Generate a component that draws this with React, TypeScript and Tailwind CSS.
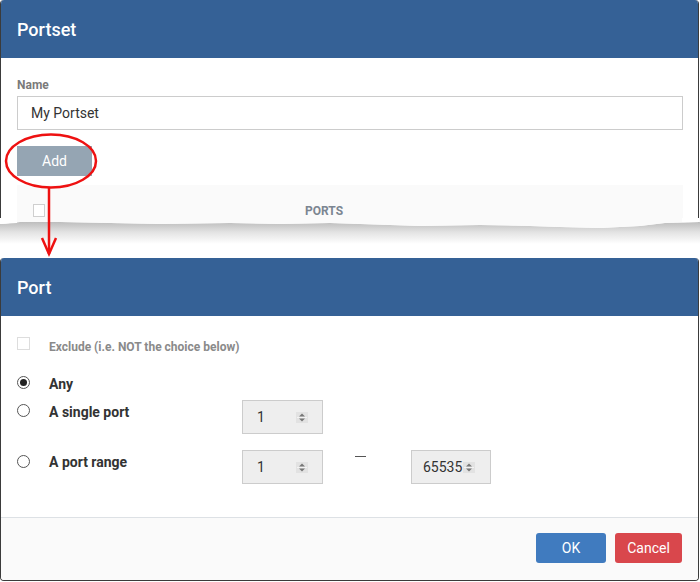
import React from "react";

function Spin() {
  return (
    <svg width="12" height="11" viewBox="0 0 12 11" className="shrink-0">
      <rect x="0" y="0" width="12" height="11" fill="#e2e2e2" />
      <path d="M3 4.5 L6 1.5 L9 4.5 Z" fill="#777" />
      <path d="M3 6.5 L6 9.5 L9 6.5 Z" fill="#777" />
      <line x1="1" y1="5.5" x2="11" y2="5.5" stroke="#f3f3f3" strokeWidth="1" />
    </svg>
  );
}

function Radio({ checked }: { checked?: boolean }) {
  return (
    <span className="w-[13px] h-[13px] rounded-full border border-[#555] bg-white flex items-center justify-center shrink-0">
      {checked && <span className="w-[7px] h-[7px] rounded-full bg-[#222]" />}
    </span>
  );
}

function NumBox({ value, w, tight }: { value: string; w: string; tight?: boolean }) {
  return (
    <div
      className={`${w} h-[34px] bg-[#eeeeee] border border-[#cccccc] flex items-center text-[14px] text-[#333] ${
        tight ? "pl-[11px] gap-[1px]" : "pl-[14px] pr-[14px] justify-between"
      }`}
    >
      <span>{value}</span>
      <Spin />
    </div>
  );
}

export default function App() {
  return (
    <div
      className="relative w-[700px] h-[582px] bg-white overflow-hidden"
      style={{ fontFamily: "Roboto, 'Liberation Sans', Arial, sans-serif" }}
    >
      {/* Portset dialog (torn) */}
      <div className="relative w-[699px] h-[226px] border-x border-[#3b3b3b] rounded-t-[4px] overflow-hidden bg-white">
        <div className="h-[58px] bg-[#356196] flex items-center pl-[16px] text-white text-[18px] font-medium">
          Portset
        </div>
        <div className="px-[16px] pt-[19px]">
          <div className="text-[12px] leading-[16px] font-bold text-[#7a7a7a]">Name</div>
          <div className="mt-[3px] h-[34px] w-[666px] border border-[#cccccc] flex items-center pl-[13px] text-[14px] text-[#333]">
            My Portset
          </div>
          <div className="mt-[16px] w-[75px] h-[30px] bg-[#95a5b3] text-white text-[14px] flex items-center justify-center">
            Add
          </div>
          <div className="mt-[9px] w-[666px] h-[50px] bg-[#fafafa] relative flex items-start pt-[19px]">
            <span className="ml-[16px] w-[12px] h-[13px] border border-[#cfcfcf] bg-white" />
            <span className="absolute left-[288px] top-[19px] text-[12px] font-bold text-[#7b8591] leading-[14px]">
              PORTS
            </span>
          </div>
        </div>
      </div>

      {/* torn edge shadow */}
      <svg className="absolute left-0 top-[218px]" width="700" height="26" viewBox="0 0 700 26">
        <defs>
          <linearGradient id="sh" x1="0" y1="0" x2="0" y2="1">
            <stop offset="0" stopColor="#bdbdbd" />
            <stop offset="0.45" stopColor="#e2e2e2" />
            <stop offset="1" stopColor="#ffffff" />
          </linearGradient>
        </defs>
        <path
          d="M0 6 L20 4 L60 4 L110 5 L160 6 L230 5 L280 6 L330 5 L390 7 L420 8 L480 7 L530 8 L560 9 L600 10 L640 8 L665 5 L700 4 L700 26 L0 26 Z"
          fill="url(#sh)"
        />
        <path
          d="M0 0 L700 0 L700 4 L665 5 L640 8 L600 10 L560 9 L530 8 L480 7 L420 8 L390 7 L330 5 L280 6 L230 5 L160 6 L110 5 L60 4 L20 4 L0 6 Z"
          fill="#fafafa"
        />
        <path
          d="M0 0 L17 0 L17 5 L0 6 Z M682 0 L699 0 L699 4 L682 4 Z"
          fill="#ffffff"
        />
      </svg>

      {/* Port dialog */}
      <div className="absolute left-0 top-[258px] w-[699px] h-[323px] border-x border-b border-[#3b3b3b] rounded-t-[4px] rounded-b-[4px] overflow-hidden bg-white flex flex-col">
        <div className="h-[58px] shrink-0 bg-[#356196] flex items-center pl-[16px] text-white text-[18px] font-medium">
          Port
        </div>
        <div className="flex-1 pl-[16px] pt-[21px] border-b border-[#dde1e5]">
          {/* Exclude */}
          <div className="flex items-start h-[20px]">
            <span className="w-[13px] h-[13px] border border-[#dddddd] bg-white shrink-0" />
            <span className="ml-[19px] mt-[2px] text-[12px] leading-[16px] font-bold text-[#8a8a8a]">
              Exclude (i.e. NOT the choice below)
            </span>
          </div>
          {/* Any */}
          <div className="flex items-start h-[16px] mt-[19px]">
            <Radio checked />
            <span className="ml-[19px] text-[14px] leading-[17px] font-bold text-[#333]">Any</span>
          </div>
          {/* Single */}
          <div className="flex items-start mt-[8px] h-[34px]">
            <div className="w-[225px] flex items-start pt-[4px]">
              <Radio />
              <span className="ml-[19px] text-[14px] leading-[17px] font-bold text-[#333]">A single port</span>
            </div>
            <NumBox value="1" w="w-[81px]" />
          </div>
          {/* Range */}
          <div className="flex items-start mt-[16px] h-[34px]">
            <div className="w-[225px] flex items-start pt-[5px]">
              <Radio />
              <span className="ml-[19px] -mt-[1px] text-[14px] leading-[17px] font-bold text-[#333]">A port range</span>
            </div>
            <NumBox value="1" w="w-[81px]" />
            <span className="ml-[32px] mt-[6px] w-[11px] h-[1px] bg-[#555]" />
            <span className="ml-[45px]">
              <NumBox value="65535" w="w-[80px]" tight />
            </span>
          </div>
        </div>
        <div className="h-[62px] shrink-0 bg-[#fafafa] flex items-start justify-end pr-[16px] pt-[15px] gap-[9px]">
          <div className="w-[70px] h-[30px] rounded-[3px] bg-[#407bbf] text-white text-[14px] flex items-center justify-center">
            OK
          </div>
          <div className="w-[67px] h-[30px] rounded-[3px] bg-[#d9474c] text-white text-[14px] flex items-center justify-center">
            Cancel
          </div>
        </div>
      </div>

      {/* red annotation */}
      <svg className="absolute left-0 top-0 pointer-events-none" width="700" height="270" viewBox="0 0 700 270">
        <ellipse cx="51" cy="161" rx="45" ry="26.5" fill="none" stroke="#ee1111" strokeWidth="2.5" />
        <line x1="49" y1="187" x2="49" y2="254" stroke="#ee1111" strokeWidth="2.5" />
        <path d="M42 238 L49 254 L56 238" fill="none" stroke="#ee1111" strokeWidth="2.5" />
      </svg>
    </div>
  );
}
